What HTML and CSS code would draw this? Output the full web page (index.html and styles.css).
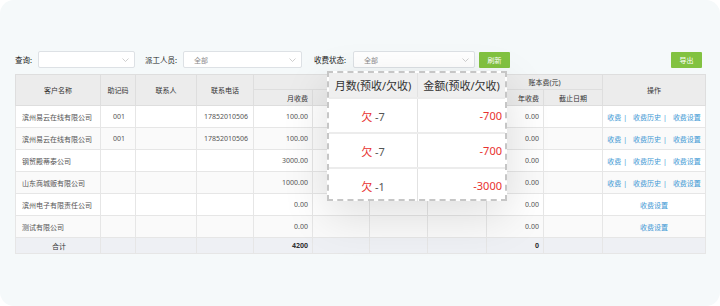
FILE: index.html
```html
<!DOCTYPE html>
<html lang="zh">
<head>
<meta charset="utf-8">
<title>收费管理</title>
<link rel="stylesheet" href="styles.css">
</head>
<body>
<div class="card">
  <div class="toolbar">
    <span class="lbl">查询:</span>
    <div class="select s1"><span></span><svg class="chev" viewBox="0 0 7 4" width="7" height="4"><polyline points="0.5,0.5 3.5,3.5 6.5,0.5"/></svg></div>
    <span class="lbl l2">派工人员:</span>
    <div class="select s2"><span>全部</span><svg class="chev" viewBox="0 0 7 4" width="7" height="4"><polyline points="0.5,0.5 3.5,3.5 6.5,0.5"/></svg></div>
    <span class="lbl l3">收费状态:</span>
    <div class="select s3"><span>全部</span><svg class="chev" viewBox="0 0 7 4" width="7" height="4"><polyline points="0.5,0.5 3.5,3.5 6.5,0.5"/></svg></div>
    <button class="btn refresh">刷新</button>
    <button class="btn export">导出</button>
  </div>

  <table class="grid">
    <colgroup>
      <col style="width:85px"><col style="width:35px"><col style="width:61px"><col style="width:57px">
      <col style="width:59px"><col style="width:57px"><col style="width:58px"><col style="width:59px">
      <col style="width:57px"><col style="width:59px"><col style="width:103px">
    </colgroup>
    <thead>
      <tr class="h1">
        <th rowspan="2">客户名称</th>
        <th rowspan="2">助记码</th>
        <th rowspan="2">联系人</th>
        <th rowspan="2">联系电话</th>
        <th colspan="4"></th>
        <th colspan="2">账本费(元)</th>
        <th rowspan="2">操作</th>
      </tr>
      <tr class="h2">
        <th class="r">月收费</th>
        <th></th>
        <th></th>
        <th></th>
        <th class="r">年收费</th>
        <th>截止日期</th>
      </tr>
    </thead>
    <tbody>
      <tr>
        <td>滨州易云在线有限公司</td><td class="c">001</td><td></td><td class="c">17852010506</td>
        <td class="r">100.00</td><td></td><td></td><td></td><td class="r">0.00</td><td></td>
        <td class="c ops"><a>收费</a><i>|</i><a>收费历史</a><i>|</i><a>收费设置</a></td>
      </tr>
      <tr class="alt">
        <td>滨州易云在线有限公司</td><td class="c">001</td><td></td><td class="c">17852010506</td>
        <td class="r">100.00</td><td></td><td></td><td></td><td class="r">0.00</td><td></td>
        <td class="c ops"><a>收费</a><i>|</i><a>收费历史</a><i>|</i><a>收费设置</a></td>
      </tr>
      <tr>
        <td>钢贸殿蒂泰公司</td><td></td><td></td><td></td>
        <td class="r">3000.00</td><td></td><td></td><td></td><td class="r">0.00</td><td></td>
        <td class="c ops"><a>收费</a><i>|</i><a>收费历史</a><i>|</i><a>收费设置</a></td>
      </tr>
      <tr class="alt">
        <td>山东商城贩有限公司</td><td></td><td></td><td></td>
        <td class="r">1000.00</td><td></td><td></td><td></td><td class="r">0.00</td><td></td>
        <td class="c ops"><a>收费</a><i>|</i><a>收费历史</a><i>|</i><a>收费设置</a></td>
      </tr>
      <tr>
        <td>滨州电子有限责任公司</td><td></td><td></td><td></td>
        <td class="r">0.00</td><td></td><td></td><td></td><td class="r">0.00</td><td></td>
        <td class="c ops"><a>收费设置</a></td>
      </tr>
      <tr class="alt">
        <td>测试有限公司</td><td></td><td></td><td></td>
        <td class="r">0.00</td><td></td><td></td><td></td><td class="r">0.00</td><td></td>
        <td class="c ops"><a>收费设置</a></td>
      </tr>
      <tr class="total">
        <td class="c">合计</td><td></td><td></td><td></td>
        <td class="r b">4200</td><td></td><td></td><td></td><td class="r b">0</td><td></td><td></td>
      </tr>
    </tbody>
  </table>

  <div class="popover">
    <table>
      <tr><th>月数(预收/欠收)</th><th>金额(预收/欠收)</th></tr>
      <tr><td class="m"><span class="owe">欠</span> -7</td><td class="amt">-700</td></tr>
      <tr><td class="m"><span class="owe">欠</span> -7</td><td class="amt">-700</td></tr>
      <tr><td class="m"><span class="owe">欠</span> -1</td><td class="amt">-3000</td></tr>
    </table>
  </div>
</div>
</body>
</html>
```

FILE: styles.css
```css
html, body {
  margin: 0;
  background: #ffffff;
  font-family: "Noto Sans", "Noto Sans CJK SC", sans-serif;
}

.card {
  position: relative;
  width: 720px;
  height: 306px;
  box-sizing: border-box;
  background: #f5f9fa;
  border-radius: 14px;
  padding: 51px 15px 0 15px;
}

/* toolbar */
.toolbar {
  display: flex;
  align-items: center;
  height: 17px;
}
.lbl {
  font-size: 7.5px;
  color: #222;
}
.select {
  height: 17px;
  box-sizing: border-box;
  background: #fff;
  border: 1px solid #dde1e5;
  border-radius: 2px;
  display: flex;
  align-items: center;
  justify-content: space-between;
  padding: 0 5px 0 10px;
  font-size: 7px;
  color: #8a8a8a;
}
.chev polyline {
  fill: none;
  stroke: #c3c3c3;
  stroke-width: 0.8;
}
.s1 { width: 97px; margin-left: 6px; }
.l2 { margin-left: 10px; }
.s2 { width: 119px; margin-left: 6px; }
.l3 { margin-left: 12px; }
.s3 { width: 122px; margin-left: 7px; }
.btn {
  height: 16px;
  width: 31px;
  padding: 0;
  border: 0;
  border-radius: 1px;
  background: #82c241;
  color: #fff;
  font-family: inherit;
  font-size: 7px;
}
.refresh { margin-left: 4px; }
.export { margin-left: auto; margin-right: 3px; }

/* grid */
.grid {
  margin-top: 6px;
  width: 690px;
  border-collapse: collapse;
  table-layout: fixed;
  font-size: 7px;
  color: #555;
  background: #fff;
}
.grid th {
  background: #ececec;
  font-weight: normal;
  color: #333;
  border: 1px solid #dedede;
  padding: 0 4px;
}
.grid .h1 th { height: 14px; }
.grid .h2 th { height: 15px; }
.grid td {
  border: 1px solid #e6e6e6;
  padding: 0 4px 0 6px;
  height: 21px;
  white-space: nowrap;
  overflow: hidden;
}
.grid tr.alt td { background: #fafafa; }
.grid .r { text-align: right; padding-right: 4px; }
.grid .c { text-align: center; }
.grid .b { font-weight: bold; color: #333; }
.grid .ops { color: #3c98d4; padding: 0; }
.grid .ops a { color: #3c98d4; }
.grid .ops i { font-style: normal; margin: 0 6px 0 2px; }
.grid .total td {
  height: 15px;
  background: #eef0f4;
  color: #333;
}

/* popover */
.popover {
  position: absolute;
  left: 327px;
  top: 71px;
  width: 180px;
  height: 130px;
  box-sizing: border-box;
  border: 2px dashed #c6c6c6;
  background: #fff;
  box-shadow: 0 14px 46px rgba(0, 0, 0, 0.13);
}
.popover table {
  width: 100%;
  border-collapse: collapse;
  table-layout: fixed;
}
.popover th {
  height: 24px;
  padding: 0;
  background: #efefef;
  font-size: 11px;
  color: #333;
  font-weight: normal;
  border-right: 1px solid #e2e2e2;
}
.popover th:first-child { width: 88px; }
.popover th:last-child { border-right: 0; }
.popover td {
  height: 33px;
  padding: 0;
  border-top: 2px solid #ececec;
  font-size: 11px;
}
.popover .m {
  text-align: center;
  color: #555;
  border-right: 1px solid #e2e2e2;
}
.popover .owe { color: #e8312f; }
.popover .amt {
  text-align: right;
  color: #e8312f;
  padding-right: 3px;
}
```
